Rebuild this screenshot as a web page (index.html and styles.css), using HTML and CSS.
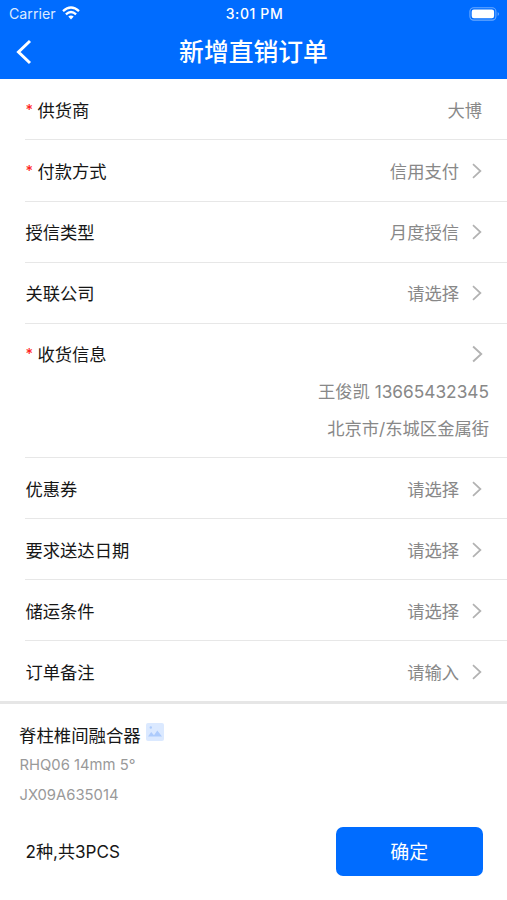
FILE: index.html
```html
<!DOCTYPE html>
<html lang="zh-CN">
<head>
<meta charset="utf-8">
<title>新增直销订单</title>
<link rel="stylesheet" href="styles.css">
</head>
<body>
<svg class="defs" width="0" height="0"><symbol id="chevron" viewBox="0 0 10 16"><path d="M1 1.2 8.4 8 1 14.8" fill="none" stroke="currentColor" stroke-width="1.7"/></symbol></svg>
<header class="header">
  <div class="status">
    <div class="carrier"><span>Carrier</span>
      <svg class="wifi" width="18" height="14" viewBox="0 0 18 14"><g fill="none" stroke="#fff" stroke-width="2.3"><path d="M1 5.1Q9-2.1 17 5.1"/><path d="M3.9 8.3Q9 3.7 14.1 8.3"/></g><path d="M6.3 10.5Q9 8.3 11.7 10.5L9 13.4Z" fill="#fff"/></svg>
    </div>
    <time class="time">3:01 PM</time>
    <svg class="battery" width="31" height="14" viewBox="0 0 31 14"><rect x=".9" y=".7" width="26" height="12.4" rx="3.8" fill="none" stroke="#69a9ff" stroke-width="1.1"/><rect x="2.7" y="2.5" width="22.4" height="8.8" rx="2.2" fill="#fff"/><path d="M28.7 4.9Q31.3 6.9 28.7 8.9Z" fill="#69a9ff"/></svg>
  </div>
  <div class="nav">
    <svg class="back" width="16" height="26" viewBox="0 0 16 26"><path d="M14 2 2.5 13 14 24" fill="none" stroke="#fff" stroke-width="3"/></svg>
    <h1 class="title">新增直销订单</h1>
  </div>
</header>
<main class="form">
  <div class="row first"><span class="label"><i class="req">*</i>供货商</span><span class="value">大博</span></div>
  <div class="row second"><span class="label"><i class="req">*</i>付款方式</span><span class="value">信用支付</span><svg class="chev"><use href="#chevron"/></svg></div>
  <div class="row"><span class="label">授信类型</span><span class="value">月度授信</span><svg class="chev"><use href="#chevron"/></svg></div>
  <div class="row"><span class="label">关联公司</span><span class="value">请选择</span><svg class="chev"><use href="#chevron"/></svg></div>
  <div class="receiver">
    <div class="row"><span class="label"><i class="req">*</i>收货信息</span><svg class="chev large"><use href="#chevron"/></svg></div>
    <p class="detail">王俊凯 <span class="phone">13665432345</span></p>
    <p class="detail">北京市/东城区金属街</p>
  </div>
  <div class="row lower"><span class="label">优惠券</span><span class="value">请选择</span><svg class="chev"><use href="#chevron"/></svg></div>
  <div class="row lower"><span class="label">要求送达日期</span><span class="value">请选择</span><svg class="chev"><use href="#chevron"/></svg></div>
  <div class="row lower"><span class="label">储运条件</span><span class="value">请选择</span><svg class="chev"><use href="#chevron"/></svg></div>
  <div class="row lower last"><span class="label">订单备注</span><span class="value">请输入</span><svg class="chev"><use href="#chevron"/></svg></div>
</main>
<section class="product">
  <h2 class="name">脊柱椎间融合器<svg class="pic" width="18" height="18" viewBox="0 0 18 18"><rect width="18" height="18" rx="2" fill="#dbe9ff"/><circle cx="4.8" cy="4.5" r="1.2" fill="#adcbfc"/><path d="M2 13.5 5.2 9 8 12.2 11.3 7.5 16 13.5Z" fill="#adcbfc"/></svg></h2>
  <p class="spec">RHQ06 14mm 5°</p>
  <p class="spec code">JX09A635014</p>
</section>
<footer class="footer"><span class="total">2种,共3PCS</span><button class="confirm" type="button">确定</button></footer>
</body>
</html>
```
FILE: styles.css
```css
* { box-sizing: border-box; }
body { margin: 0; width: 507px; height: 900px; overflow: hidden; background: #fff; color: #161616; font: 400 17.3px/26px Inter, "Noto Sans CJK SC", sans-serif; }
h1, h2, p { margin: 0; font-weight: 400; }
.defs { display: none; }
.header { height: 79px; background: #006cff; color: #fff; }
.status { height: 27px; padding: 0 7px 0 9px; display: grid; grid-template-columns: 1fr auto 1fr; align-items: center; line-height: 27px; }
.carrier { display: flex; align-items: center; gap: 6px; font-size: 14.2px; color: #dceaff; }
.wifi { margin-top: -1px; }
.time { font-size: 14px; font-weight: 500; letter-spacing: .6px; }
.battery { justify-self: end; }
.nav { height: 50px; display: grid; grid-template-columns: 33px 1fr 33px; align-items: center; }
.back { margin-left: 16px; }
.title { text-align: center; font-size: 24.8px; line-height: 48px; font-weight: 500; }
.form { padding-left: 25px; border-bottom: 3px solid #e6e6e6; }
.row { height: 61px; padding: 1px 25px 0 0; display: flex; align-items: center; border-bottom: 1px solid #e7e7e7; }
.first { padding-top: 3px; }
.second { height: 62px; padding-top: 2px; }
.lower { padding-top: 3px; }
.last { height: 60px; border: 0; }
.label { flex: 1; display: flex; align-items: center; padding-left: .5px; }
.req { width: 12px; margin-top: -2px; color: #f22; font: 500 14.5px/20px Inter, sans-serif; }
.value { color: #888; }
.chev { width: 10px; height: 16px; margin: -2px 0 0 13px; color: #b2b2b2; }
.large { width: 11px; height: 18px; margin-right: -1px; }
.receiver { height: 134px; border-bottom: 1px solid #e7e7e7; }
.receiver .row { border: 0; height: 60px; }
.detail { height: 37px; padding-right: 18px; text-align: right; color: #888; line-height: 15px; }
.product { height: 109px; padding: 17px 19px 0; }
.name { display: flex; font-size: 17.4px; line-height: 29px; height: 28px; }
.pic { margin: 2px 0 0 5px; }
.spec { color: #999; font-size: 14.8px; line-height: 31px; padding-left: .5px; }
.name + .spec { margin-top: 1px; line-height: 30px; }
.footer { display: flex; align-items: center; justify-content: space-between; height: 77px; padding: 0 24.3px 0 25.5px; }
.total { font-size: 17.1px; }
.confirm { width: 147px; height: 49px; border: 0; border-radius: 7px; background: #006cff; color: #fff; font: 400 19px/51px Inter, "Noto Sans CJK SC", sans-serif; padding: 0; }
```
